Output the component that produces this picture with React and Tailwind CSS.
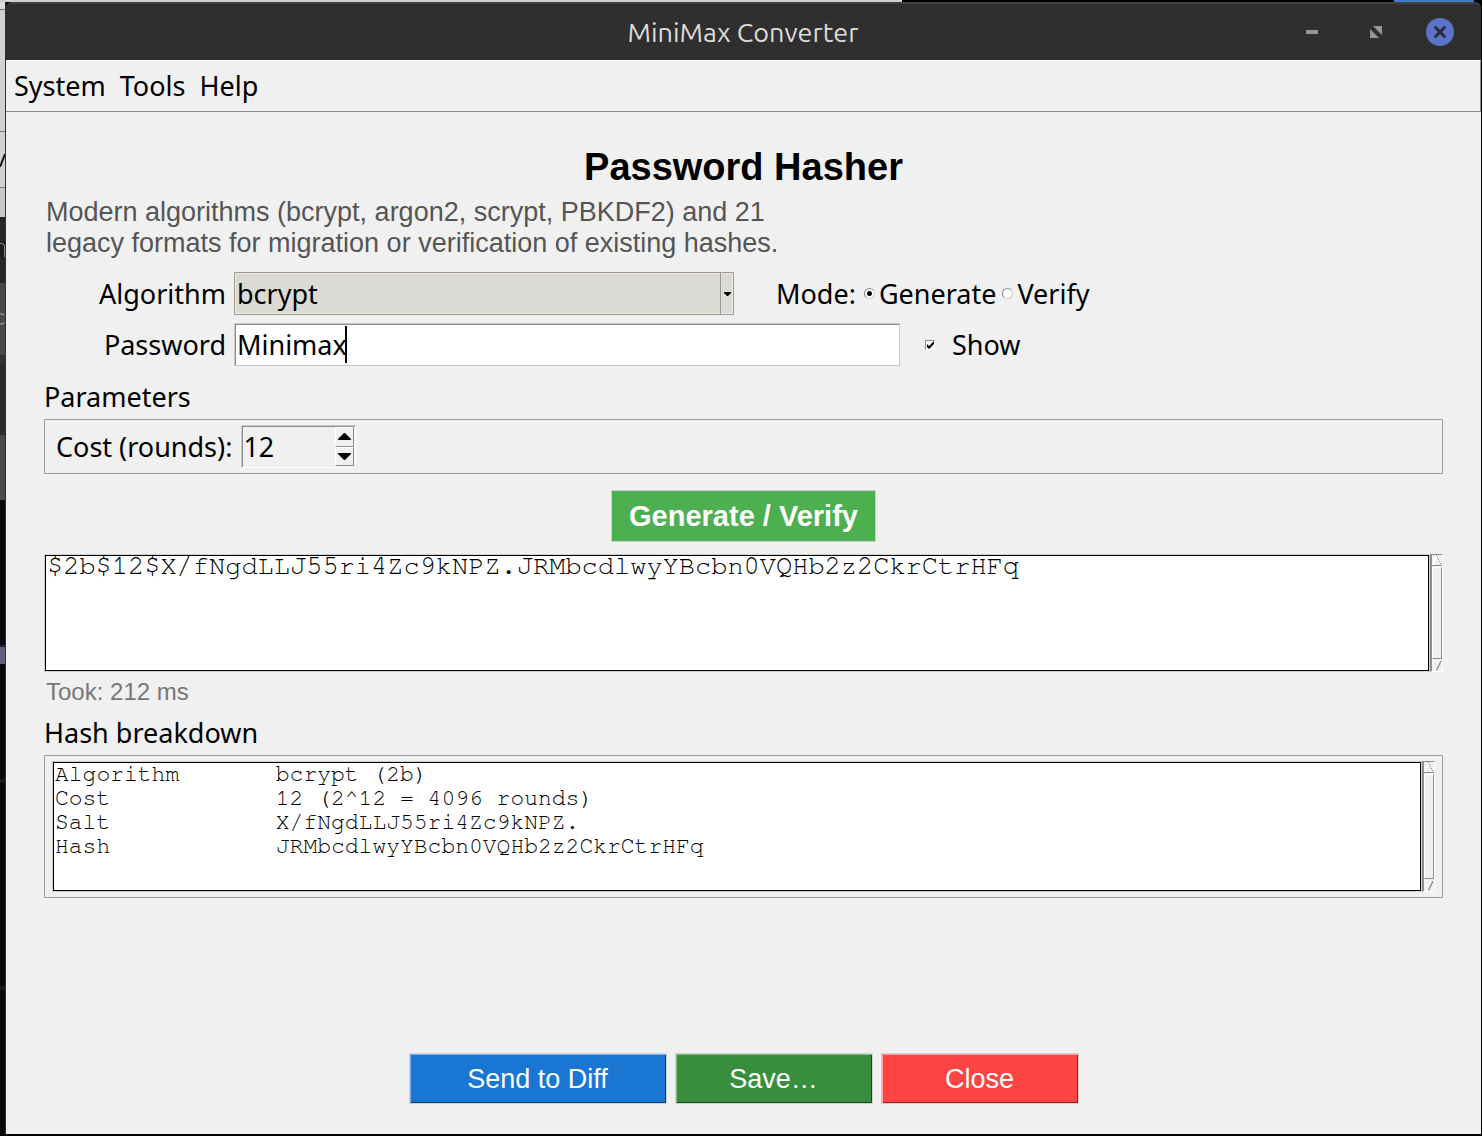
import React, { useState } from "react";

const HASH = "$2b$12$X/fNgdLLJ55ri4Zc9kNPZ.JRMbcdlwyYBcbn0VQHb2z2CkrCtrHFq";

const BREAKDOWN = [
  ["Algorithm", "bcrypt (2b)"],
  ["Cost", "12 (2^12 = 4096 rounds)"],
  ["Salt", "X/fNgdLLJ55ri4Zc9kNPZ."],
  ["Hash", "JRMbcdlwyYBcbn0VQHb2z2CkrCtrHFq"],
]
  .map(([key, value]) => key.padEnd(16) + value)
  .join("\n");

const DesktopTop = () => (
  <div className="flex h-[2px] shrink-0 pr-2" aria-hidden="true">
    <div className="w-[61.2%] bg-[#cfcfcf]" />
    <div className="flex-1" />
    <div className="w-20 bg-[#3f7cc4]" />
  </div>
);

// Slice of the windows that lie behind this one
const DesktopLeft = () => (
  <div
    className="flex w-[6px] shrink-0 flex-col border-r border-[#3a3a3a]/80 bg-[#08080d]"
    aria-hidden="true"
  >
    <div className="h-2 border-b border-[#777] bg-[#dcdcdc]" />
    <div className="h-[122px] border-b border-[#777] bg-[#d2d2d2]" />
    <div className="flex h-[56px] items-center border-b border-[#777] bg-[#d2d2d2]">
      <svg className="h-4 w-[5px]" viewBox="0 0 5 16">
        <path d="M0 15L5 2" stroke="#111" strokeWidth="2" />
      </svg>
    </div>
    <div className="h-[29px] bg-[#c8c8c8]" />
    <div className="h-[26px] bg-[#262626]" />
    <div className="h-[14px] rounded-tr border-t border-r border-[#888] bg-[#1d1d1d]" />
    <div className="h-[26px] bg-[#262626]" />
    <div className="flex h-[72px] items-center bg-[#484848]">
      <svg className="h-3 w-[5px]" viewBox="0 0 5 12">
        <path d="M0 1h2q2 0 2 2M0 11h2q2 0 2-2" fill="none" stroke="#aaa" />
      </svg>
    </div>
    <div className="h-[9px] bg-[#333]" />
    <div className="h-[71px] bg-[#2c2c2c]" />
    <div className="h-[65px] bg-[#4a4a4a]" />
    <div className="h-[145px]" />
    <div className="h-[19px] border-t-2 border-[#222230] bg-[#5f5f78]" />
    <div className="h-[115px]" />
    <div className="h-1 bg-[#1b1b1f]" />
    <div className="h-[203px]" />
    <div className="h-1 bg-[#1b1b1f]" />
    <div className="flex-1" />
  </div>
);

const TitleBar = () => (
  <header className="flex h-[58px] shrink-0 items-center rounded-t-md border-t-2 border-[#404040] bg-[#2f2f2f] pr-[27px] pl-[182px]">
    <h1 className="flex-1 text-center font-[Ubuntu,'Noto_Sans',sans-serif] text-[27px] leading-8 text-[#dedbd8]">
      MiniMax Converter
    </h1>
    <div className="flex gap-9">
      <button className="grid size-7 place-items-center" aria-label="Minimize">
        <svg className="h-3 w-3" viewBox="0 0 12 12">
          <path d="M0 4h12v4H0z" fill="#969799" />
        </svg>
      </button>
      <button className="grid size-7 place-items-center" aria-label="Restore">
        <svg className="h-3 w-3" viewBox="0 0 12 12">
          <path d="M3 0h9v9zM0 3l9 9H0z" fill="#969799" />
        </svg>
      </button>
      <button
        className="grid size-7 place-items-center rounded-full bg-[#5b73c8]"
        aria-label="Close window"
      >
        <svg className="h-3 w-3" viewBox="0 0 12 12">
          <path
            d="M1.5 1.5l9 9M10.5 1.5l-9 9"
            stroke="#2b2d38"
            strokeWidth="3"
            strokeLinecap="round"
          />
        </svg>
      </button>
    </div>
  </header>
);

const MenuBar = () => (
  <nav className="flex h-[52px] shrink-0 items-center gap-[14px] border-t border-r border-b border-t-white border-r-[#8c8c8c] border-b-[#8c8c8c] pl-2">
    <button>System</button>
    <button>Tools</button>
    <button>Help</button>
  </nav>
);

const ScrollBar = () => (
  <div
    className="flex w-[13px] shrink-0 flex-col gap-px border-t border-r border-b border-l-2 border-t-[#8c8c8c] border-r-white border-b-white border-l-[#8c8c8c] bg-[#efefef]"
    aria-hidden="true"
  >
    <svg className="h-[11px] w-full shrink-0" viewBox="0 0 10 11">
      <path d="M0.5 10L4.5 0.5" stroke="#fff" strokeWidth="2" />
      <path d="M4.5 0v2M5.5 2v2M6.5 4v2M7.5 6v2M8.5 8v2" stroke="#8c8c8c" strokeDasharray="1 1" />
      <path d="M0 10.5h10" stroke="#8c8c8c" />
    </svg>
    <div className="flex-1 border-t border-r border-b border-l border-t-white border-r-[#8c8c8c] border-b-[#8c8c8c] border-l-white" />
    <svg className="h-[11px] w-full shrink-0" viewBox="0 0 10 11">
      <path d="M0 0.5h9M0.5 1L4.5 10" stroke="#fff" strokeDasharray="1 1" />
      <path d="M9 1L4.5 10.5" stroke="#8c8c8c" strokeWidth="1.3" />
    </svg>
  </div>
);

const ModeRadio = ({ label, checked, onChange }) => (
  <label className="flex items-center gap-1">
    <input
      type="radio"
      name="mode"
      checked={checked}
      onChange={onChange}
      className="size-[11px] appearance-none rounded-full border border-t-[#8c8c8c] border-r-[#d4d0c8] border-b-[#d4d0c8] border-l-[#8c8c8c] bg-white checked:bg-[radial-gradient(circle,#000_2px,#fff_3px)]"
    />
    {label}
  </label>
);

const App = () => {
  const [algorithm, setAlgorithm] = useState("bcrypt");
  const [mode, setMode] = useState("Generate");
  const [password, setPassword] = useState("Minimax");
  const [show, setShow] = useState(true);
  const [cost, setCost] = useState(12);

  return (
    <div className="flex min-h-screen flex-col bg-black font-['Noto_Sans',sans-serif] text-[27px] leading-9 text-black">
      <DesktopTop />
      <div className="flex flex-1 pr-px pb-[2px]">
        <DesktopLeft />
        <div className="flex min-w-0 flex-1 flex-col">
          <TitleBar />
          <div className="flex flex-1 flex-col bg-[#f0f0f0]">
            <MenuBar />
            <main className="flex flex-1 flex-col px-[38px] pt-8 pb-[30px]">
              <h2 className="text-center font-['Liberation_Sans',sans-serif] text-[38px] leading-[46px] font-bold">
                Password Hasher
              </h2>
              <p className="mt-[7px] px-[2px] font-['Liberation_Sans',sans-serif] text-[27px] leading-[31px] text-[#555]">
                Modern algorithms (bcrypt, argon2, scrypt, PBKDF2) and 21
                <br />
                legacy formats for migration or verification of existing hashes.
              </p>

              <div className="mt-[13px] flex items-center">
                <label htmlFor="algorithm" className="w-[190px] pr-2 text-right">
                  Algorithm
                </label>
                <div className="relative w-[500px]">
                  <select
                    id="algorithm"
                    value={algorithm}
                    onChange={(e) => setAlgorithm(e.target.value)}
                    className="block h-[43px] w-full appearance-none rounded-[1px] border border-[#9e9a91] bg-[#dcdad5] pl-[2px] shadow-[inset_0_0_0_1px_#eeebe7]"
                  >
                    <option>bcrypt</option>
                    <option>argon2</option>
                    <option>scrypt</option>
                    <option>PBKDF2</option>
                  </select>
                  <div className="pointer-events-none absolute inset-y-px right-px grid w-[13px] place-items-center border-l border-[#9e9a91]">
                    <svg className="h-1 w-[7px]" viewBox="0 0 7 4">
                      <path d="M0 0h7v1L4 4H3L0 1z" />
                    </svg>
                  </div>
                </div>
                <div className="ml-[42px] flex items-center gap-[6px]">
                  <span className="pr-[2px]">Mode:</span>
                  <ModeRadio
                    label="Generate"
                    checked={mode === "Generate"}
                    onChange={() => setMode("Generate")}
                  />
                  <ModeRadio
                    label="Verify"
                    checked={mode === "Verify"}
                    onChange={() => setMode("Verify")}
                  />
                </div>
              </div>

              <div className="mt-2 flex items-center">
                <label htmlFor="password" className="w-[190px] pr-2 text-right">
                  Password
                </label>
                <div className="relative w-[666px]">
                  <input
                    id="password"
                    type={show ? "text" : "password"}
                    value={password}
                    onChange={(e) => setPassword(e.target.value)}
                    className="block h-[43px] w-full border border-[#c8c8c8] bg-white pl-[2px] caret-transparent shadow-[inset_1px_1px_0_#8c8c8c] outline-none"
                  />
                  <span className="pointer-events-none absolute top-[3px] left-[111px] h-[37px] w-[2px] bg-black" />
                </div>
                <label className="ml-[25px] flex items-center gap-[17px]">
                  <span className="relative block size-[10px]">
                    <input
                      type="checkbox"
                      checked={show}
                      onChange={(e) => setShow(e.target.checked)}
                      className="block size-[10px] appearance-none border border-t-[#8c8c8c] border-r-white border-b-white border-l-[#8c8c8c] bg-[#f8f8f8]"
                    />
                    {show && (
                      <svg className="pointer-events-none absolute inset-0" viewBox="0 0 10 10">
                        <path d="M2 4v3l2 2 5-5V1L4 6z" />
                      </svg>
                    )}
                  </span>
                  Show
                </label>
              </div>

              <section>
                <h3 className="mt-[13px]">Parameters</h3>
                <div className="mt-1 flex h-[55px] items-center rounded-[1px] border border-[#9e9a91] pl-[11px]">
                  <label htmlFor="cost" className="pr-[9px]">
                    Cost (rounds):
                  </label>
                  <div className="flex h-[43px] w-[115px] border border-[#c8c8c8] border-r-white border-b-white p-px shadow-[inset_1px_1px_0_#8c8c8c]">
                    <input
                      id="cost"
                      type="text"
                      inputMode="numeric"
                      value={cost}
                      onChange={(e) => setCost(Number(e.target.value) || 0)}
                      className="min-w-0 flex-1 bg-transparent outline-none"
                    />
                    <div className="flex w-[19px] flex-col">
                      <button
                        className="grid flex-1 place-items-center border border-t-white border-r-[#8c8c8c] border-b-[#8c8c8c] border-l-white"
                        aria-label="Increase cost"
                        onClick={() => setCost(cost + 1)}
                      >
                        <svg className="h-[7px] w-[13px]" viewBox="0 0 13 7">
                          <path d="M6 0h1l6 6v1H0V6z" />
                        </svg>
                      </button>
                      <button
                        className="grid flex-1 place-items-center border border-t-white border-r-[#8c8c8c] border-b-[#8c8c8c] border-l-white"
                        aria-label="Decrease cost"
                        onClick={() => setCost(cost - 1)}
                      >
                        <svg className="h-[7px] w-[13px]" viewBox="0 0 13 7">
                          <path d="M0 0h13v1L7 7H6L0 1z" />
                        </svg>
                      </button>
                    </div>
                  </div>
                </div>
              </section>

              <button className="mt-4 h-[52px] w-[265px] self-center border border-[#d0d0d0] bg-[#4caf50] font-['Liberation_Sans',sans-serif] text-[29px] font-bold text-white">
                Generate / Verify
              </button>

              <div className="mt-3 flex h-[118px]">
                <div className="min-w-0 flex-1 border border-[#d0d0d0]">
                  <textarea
                    readOnly
                    aria-label="Hash"
                    value={HASH}
                    className="block size-full resize-none overflow-hidden border border-black bg-white px-px font-['Nimbus_Mono_PS','Courier_10_Pitch',FreeMono,'Liberation_Mono',monospace] text-[27px] leading-5 outline-none"
                  />
                </div>
                <ScrollBar />
              </div>
              <p className="mt-1 px-[2px] font-['Liberation_Sans',sans-serif] text-[24px] leading-8 text-[#777]">
                Took: 212 ms
              </p>

              <section>
                <h3 className="mt-[7px]">Hash breakdown</h3>
                <div className="mt-1 flex h-[143px] rounded-[1px] border border-[#9e9a91] px-[7px] py-[5px]">
                  <div className="min-w-0 flex-1 border border-[#d0d0d0]">
                    <textarea
                      readOnly
                      aria-label="Hash breakdown"
                      value={BREAKDOWN}
                      className="block size-full resize-none overflow-hidden border border-black bg-white px-px font-['Nimbus_Mono_PS','Courier_10_Pitch',FreeMono,'Liberation_Mono',monospace] text-[23px] leading-6 outline-none"
                    />
                  </div>
                  <ScrollBar />
                </div>
              </section>

              <footer className="mt-auto flex justify-center gap-2 pt-8 font-['Liberation_Sans',sans-serif] text-[27px] text-white">
                <button className="h-[51px] w-[258px] border border-[#d0d0d0] bg-[#1976d2] shadow-[inset_1px_1px_0_#7fb2ee,inset_-1px_-1px_0_#0d3c6b]">
                  Send to Diff
                </button>
                <button className="h-[51px] w-[198px] border border-[#d0d0d0] bg-[#388e3c] shadow-[inset_1px_1px_0_#7fc283,inset_-1px_-1px_0_#1c471e]">
                  Save…
                </button>
                <button className="h-[51px] w-[198px] border border-[#d0d0d0] bg-[#ff4444] shadow-[inset_1px_1px_0_#ff9c9c,inset_-1px_-1px_0_#8f2424]">
                  Close
                </button>
              </footer>
            </main>
          </div>
        </div>
      </div>
    </div>
  );
};

export default App;
